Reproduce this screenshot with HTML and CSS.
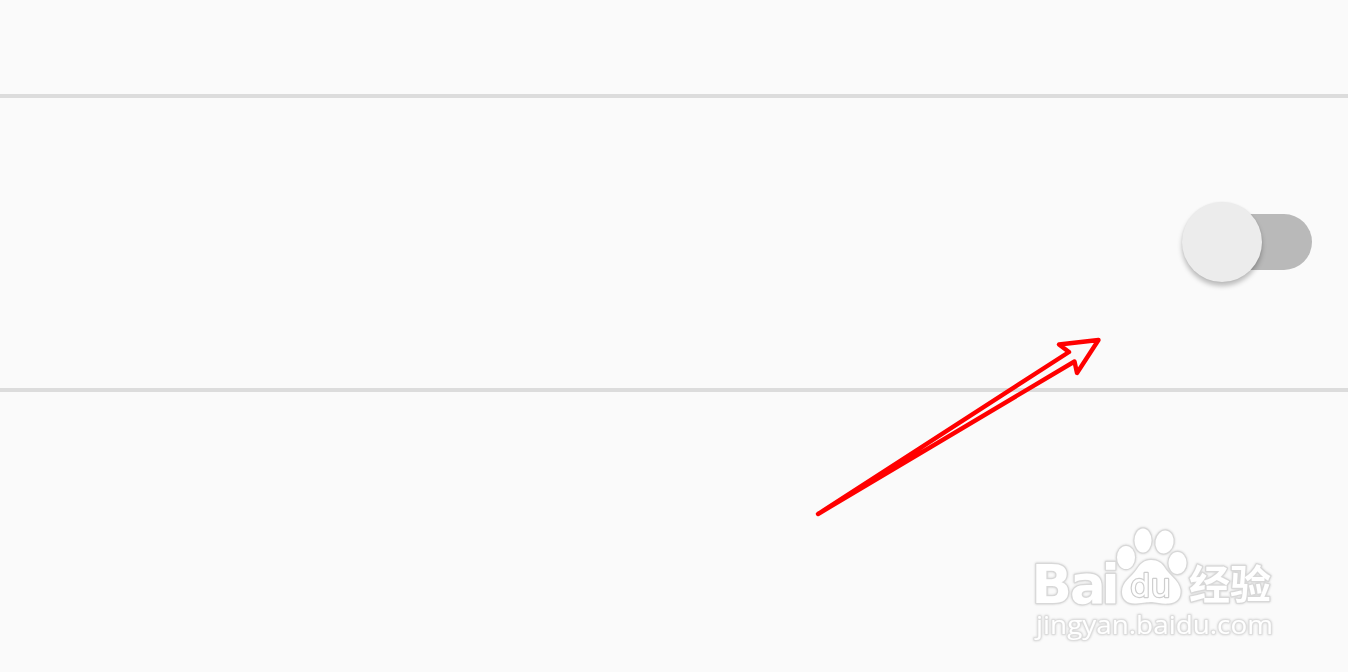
FILE: index.html
```html
<!DOCTYPE html>
<html lang="zh-CN">
<head>
    <meta charset="UTF-8">
    <meta name="viewport" content="width=device-width, initial-scale=1.0">
    <title>Settings</title>
    <link rel="stylesheet" href="styles.css">
</head>
<body>
    <main class="settings">
        <div class="row row-top"></div>
        <div class="row row-switch">
            <button class="switch" role="switch" aria-checked="false" aria-label="Toggle">
                <span class="thumb"></span>
            </button>
        </div>

        <!-- pointer arrow -->
        <svg class="arrow" width="300" height="190" viewBox="810 330 300 190">
            <path d="M818 514 L1069 352 L1059 344.500 L1098.500 340 L1077 373 L1074.500 361.500 Z"/>
        </svg>

        <!-- watermark -->
        <svg class="watermark" width="260" height="130" viewBox="1025 520 260 130">
            <text class="latin" x="1031.500 1070 1101.500" y="602.500" font-size="53">Bai</text>
            <ellipse cx="1126" cy="557.500" rx="9" ry="11.500"/>
            <ellipse cx="1143" cy="540.500" rx="8.500" ry="12"/>
            <ellipse cx="1164.500" cy="542" rx="9" ry="11.500" transform="rotate(10 1164.500 542)"/>
            <ellipse cx="1177.500" cy="563" rx="9" ry="11"/>
            <path d="M1151 560 C1144 560 1140 564 1137 569 C1132 577 1122 581 1122 592 C1122 600 1128 604 1136 603.500 C1144 603 1147 602 1152 602 C1158 603 1163 604 1169 603.500 C1177 603 1181 598 1180.500 590 C1179 580 1169 575 1165 568 C1162 563 1158 560 1151 560 Z"/>
            <text class="du" x="1130" y="597" font-size="32" textLength="41" lengthAdjust="spacingAndGlyphs">du</text>
            <text class="han" x="1189" y="599" font-size="40" textLength="82" lengthAdjust="spacingAndGlyphs">经验</text>
            <text class="site" x="1036" y="634" font-size="25" textLength="237" lengthAdjust="spacingAndGlyphs">jingyan.baidu.com</text>
        </svg>
    </main>
</body>
</html>
```

FILE: styles.css
```css
body {
    margin: 0;
    background: #fafafa;
    font-family: "Open Sans", "Noto Sans CJK SC", sans-serif;
}
.settings {
    position: relative;
    height: 672px;
    overflow: hidden;
}
.row {
    box-sizing: border-box;
    border-bottom: 4px solid #dcdcdc;
}
.row-top {
    height: 98px;
}
.row-switch {
    height: 294px;
    display: flex;
    align-items: center;
    justify-content: flex-end;
    padding-right: 36px;
}
.switch {
    display: flex;
    align-items: center;
    width: 124px;
    height: 56px;
    margin: -2px 0 0;
    padding: 0;
    border: none;
    border-radius: 28px;
    background: #b9b9b9;
    cursor: pointer;
}
.thumb {
    flex: none;
    width: 80px;
    height: 80px;
    margin-left: -6px;
    border-radius: 50%;
    background: #ececec;
    box-shadow: 0 4px 5px rgba(0, 0, 0, 0.25), 0 0 2px rgba(0, 0, 0, 0.06);
}
.arrow {
    position: absolute;
    left: 810px;
    top: 330px;
    fill: none;
    stroke: #ff0000;
    stroke-width: 4.4;
    stroke-linejoin: round;
}
.watermark {
    position: absolute;
    left: 1025px;
    top: 520px;
    fill: #ffffff;
    stroke: #d8d8d8;
    stroke-width: 2.4;
    stroke-linejoin: round;
    paint-order: stroke;
    filter: drop-shadow(0 0 1px #d0d0d0);
}
.latin {
    font-family: "DejaVu Sans", sans-serif;
    font-weight: 700;
}
.du {
    font-family: "DejaVu Sans", sans-serif;
    stroke: #cecece;
}
.han {
    font-family: "Noto Sans CJK SC", sans-serif;
    font-weight: 700;
}
.site {
    font-family: "Open Sans", sans-serif;
    stroke: #dedede;
    stroke-width: 2;
}
```
